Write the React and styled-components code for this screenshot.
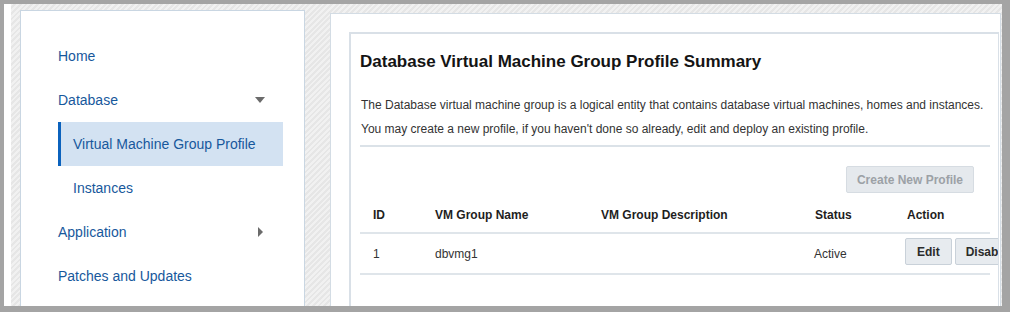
import React from 'react';
import styled, { createGlobalStyle } from 'styled-components';

const GlobalStyle = createGlobalStyle`
  html, body {
    margin: 0;
    padding: 0;
    background: #a4a4a4;
  }
  body {
    font-family: "Liberation Sans", Arial, sans-serif;
  }
`;

const Frame = styled.div`
  width: 1010px;
  height: 312px;
  box-sizing: border-box;
  padding: 4px 8px 0 4px;
  background: #a4a4a4;
  overflow: hidden;
`;

const Page = styled.div`
  height: 302px;
  box-sizing: border-box;
  display: flex;
  align-items: flex-start;
  gap: 25px;
  padding: 6px 0 0 9px;
  border-left: 7px solid #ffffff;
  overflow: hidden;
  background: repeating-linear-gradient(
    135deg,
    #f1f1f1 0px,
    #f1f1f1 2px,
    #e6e6e6 2px,
    #e6e6e6 4px
  );
`;

const Sidebar = styled.nav`
  width: 285px;
  flex-shrink: 0;
  height: 340px;
  box-sizing: border-box;
  background: #ffffff;
  border: 1px solid #c9d6e2;
  padding: 23px 21px 0 37px;
`;

const NavItem = styled.div`
  height: 44px;
  display: flex;
  align-items: center;
  justify-content: space-between;
  box-sizing: border-box;
  padding-left: ${(p) => (p.$sub ? '15px' : '0')};
  padding-right: 19px;
  font-size: 14px;
  color: #17589c;
  background: ${(p) => (p.$active ? '#d3e2f2' : 'transparent')};
  border-left: ${(p) => (p.$active ? '3px solid #0b62bd' : 'none')};
  ${(p) => p.$active && 'padding-left: 12px;'}
`;

const ArrowDown = styled.span`
  width: 0;
  height: 0;
  border-left: 5px solid transparent;
  border-right: 5px solid transparent;
  border-top: 6px solid #6b6b6b;
  margin-right: -1px;
`;

const ArrowRight = styled.span`
  width: 0;
  height: 0;
  border-top: 5px solid transparent;
  border-bottom: 5px solid transparent;
  border-left: 5px solid #6b6b6b;
  margin-right: 1px;
`;

const Content = styled.main`
  flex: 1;
  height: 340px;
  margin-top: 3px;
  margin-right: 1px;
  box-sizing: border-box;
  background: #ffffff;
  border: 1px solid #d3dce4;
  padding: 18px 0 0 18px;
`;

const Card = styled.section`
  height: 320px;
  box-sizing: border-box;
  border: 2px solid #d9e0e7;
  border-right-width: 1px;
  margin-right: 1px;
  padding: 18px 8px 0 9px;
  overflow: hidden;
`;

const Title = styled.h1`
  margin: 0;
  font-size: 17px;
  line-height: 20px;
  font-weight: bold;
  color: #141414;
`;

const Description = styled.p`
  margin: 21px 0 0 1px;
  font-size: 12px;
  line-height: 24px;
  color: #333333;
`;

const Divider = styled.hr`
  margin: 4px 0 0;
  border: none;
  height: 2px;
  background: #dbe2e8;
`;

const Toolbar = styled.div`
  display: flex;
  justify-content: flex-end;
  padding: 19px 16px 0 0;
`;

const Button = styled.button`
  font-family: "Liberation Sans", Arial, sans-serif;
  font-size: 12px;
  font-weight: bold;
  height: 27px;
  padding: 0 ${(p) => p.$pad || '10px'};
  border-radius: 2px;
  border: 1px solid ${(p) => (p.disabled ? '#d6dce2' : '#c9d1d9')};
  background: ${(p) => (p.disabled ? '#e5e9ed' : '#e7ebef')};
  color: ${(p) => (p.disabled ? '#9ca1a6' : '#2b2b2b')};
  white-space: nowrap;
`;

const Table = styled.table`
  width: 630px;
  table-layout: fixed;
  border-collapse: collapse;
  font-size: 12px;
  color: #333333;
`;

const Th = styled.th`
  width: ${(p) => p.$w};
  text-align: left;
  font-weight: bold;
  line-height: 14px;
  padding: 15px 0 10px 13px;
  border-bottom: 2px solid #dfe5ea;
  color: #1e1e1e;
  white-space: nowrap;
`;

const Td = styled.td`
  height: 39px;
  padding: 0 0 0 ${(p) => p.$pl || '13px'};
  border-bottom: 2px solid #dfe5ea;
  vertical-align: middle;
  white-space: nowrap;
  overflow: visible;
`;

const Actions = styled.div`
  display: flex;
  gap: 3px;
  margin-top: -4px;
`;

const navItems = [
  { label: 'Home' },
  { label: 'Database', arrow: 'down' },
  { label: 'Virtual Machine Group Profile', sub: true, active: true },
  { label: 'Instances', sub: true },
  { label: 'Application', arrow: 'right' },
  { label: 'Patches and Updates' },
];

const rows = [{ id: 1, name: 'dbvmg1', description: '', status: 'Active' }];

function App() {
  return (
    <Frame>
      <GlobalStyle />
      <Page>
        <Sidebar>
          {navItems.map((item) => (
            <NavItem key={item.label} $sub={item.sub} $active={item.active}>
              <span>{item.label}</span>
              {item.arrow === 'down' && <ArrowDown />}
              {item.arrow === 'right' && <ArrowRight />}
            </NavItem>
          ))}
        </Sidebar>
        <Content>
          <Card>
            <Title>Database Virtual Machine Group Profile Summary</Title>
            <Description>
              The Database virtual machine group is a logical entity that contains database virtual machines, homes and instances.
              <br />
              You may create a new profile, if you haven't done so already, edit and deploy an existing profile.
            </Description>
            <Divider />
            <Toolbar>
              <Button disabled>Create New Profile</Button>
            </Toolbar>
            <Table>
              <thead>
                <tr>
                  <Th $w="49px">ID</Th>
                  <Th $w="153px">VM Group Name</Th>
                  <Th $w="201px">VM Group Description</Th>
                  <Th $w="79px">Status</Th>
                  <Th $w="83px">Action</Th>
                </tr>
              </thead>
              <tbody>
                {rows.map((row) => (
                  <tr key={row.id}>
                    <Td>{row.id}</Td>
                    <Td>{row.name}</Td>
                    <Td>{row.description}</Td>
                    <Td $pl="12px">{row.status}</Td>
                    <Td $pl="11px">
                      <Actions>
                        <Button $pad="11px">Edit</Button>
                        <Button $pad="10px">Disable</Button>
                      </Actions>
                    </Td>
                  </tr>
                ))}
              </tbody>
            </Table>
          </Card>
        </Content>
      </Page>
    </Frame>
  );
}

export default App;
